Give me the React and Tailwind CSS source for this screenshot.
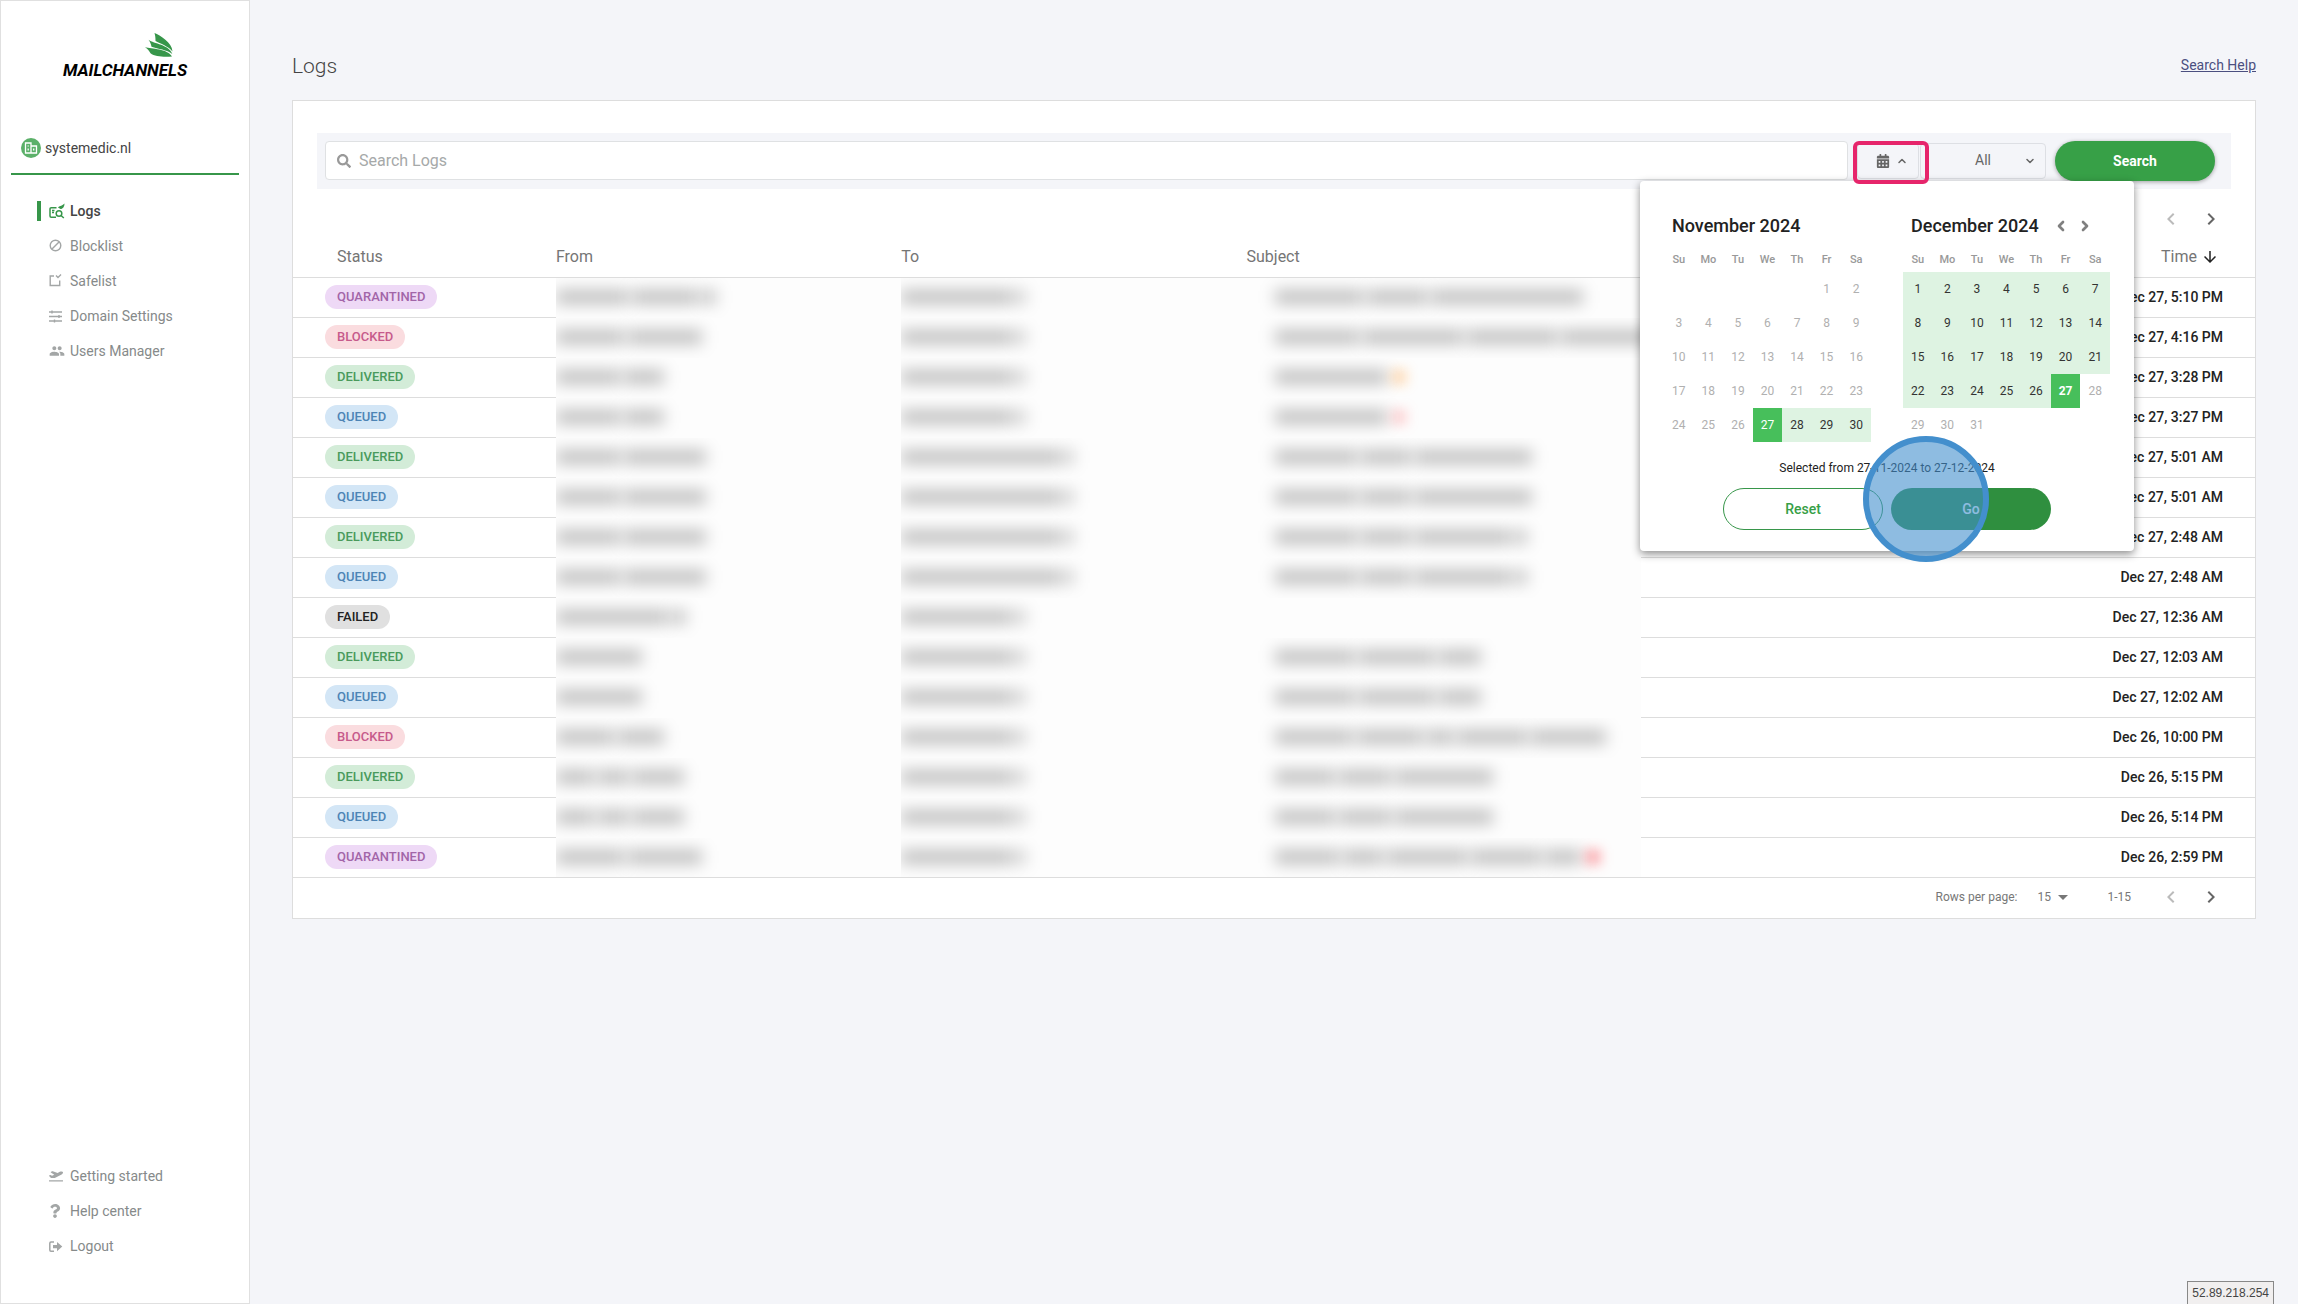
import React from 'react';
import { FaCalendarAlt, FaPlaneDeparture, FaQuestion, FaSearch } from 'react-icons/fa';
import { MdArrowDownward, MdArrowDropDown, MdChevronLeft, MdChevronRight, MdGroup } from 'react-icons/md';
import { ChevronDown, ChevronLeft, ChevronRight, ChevronUp } from 'lucide-react';

const badgeStyles = {
    QUARANTINED: 'bg-[#eed9f6] text-[#a265a8]',
    BLOCKED: 'bg-[#fadcdf] text-[#c65a8b]',
    DELIVERED: 'bg-[#d3ecd8] text-[#4a9a5c]',
    QUEUED: 'bg-[#d3e6f6] text-[#4d84b5]',
    FAILED: 'bg-[#e0e0e0] text-[#222222]'
};

// Anchos de los bloques ocultos de cada columna
const shortTo = [112, 8];
const longTo = [160, 8];

const logs = [
    { status: 'QUARANTINED', time: 'Dec 27, 5:10 PM', from: [72, 66, 14], to: shortTo, subject: [88, 60, 152] },
    { status: 'BLOCKED', time: 'Dec 27, 4:16 PM', from: [68, 74], to: shortTo, subject: [84, 100, 90, 90] },
    { status: 'DELIVERED', time: 'Dec 27, 3:28 PM', from: [64, 40], to: shortTo, subject: [112], mark: 'bg-orange-400/25' },
    { status: 'QUEUED', time: 'Dec 27, 3:27 PM', from: [64, 40], to: shortTo, subject: [112], mark: 'bg-red-400/25' },
    { status: 'DELIVERED', time: 'Dec 27, 5:01 AM', from: [64, 82], to: longTo, subject: [82, 50, 117] },
    { status: 'QUEUED', time: 'Dec 27, 5:01 AM', from: [64, 82], to: longTo, subject: [82, 50, 117] },
    { status: 'DELIVERED', time: 'Dec 27, 2:48 AM', from: [64, 82], to: longTo, subject: [82, 50, 96, 12] },
    { status: 'QUEUED', time: 'Dec 27, 2:48 AM', from: [64, 82], to: longTo, subject: [82, 50, 96, 12] },
    { status: 'FAILED', time: 'Dec 27, 12:36 AM', from: [112, 14], to: shortTo, subject: [] },
    { status: 'DELIVERED', time: 'Dec 27, 12:03 AM', from: [86], to: shortTo, subject: [80, 76, 42] },
    { status: 'QUEUED', time: 'Dec 27, 12:02 AM', from: [86], to: shortTo, subject: [80, 76, 42] },
    { status: 'BLOCKED', time: 'Dec 26, 10:00 PM', from: [58, 46], to: shortTo, subject: [78, 66, 26, 70, 75] },
    { status: 'DELIVERED', time: 'Dec 26, 5:15 PM', from: [38, 30, 52], to: shortTo, subject: [60, 52, 98] },
    { status: 'QUEUED', time: 'Dec 26, 5:14 PM', from: [38, 30, 52], to: shortTo, subject: [60, 52, 98] },
    { status: 'QUARANTINED', time: 'Dec 26, 2:59 PM', from: [68, 74], to: shortTo, subject: [64, 40, 80, 70, 36], mark: 'bg-red-500/35' }
];

const weekDays = ['Su', 'Mo', 'Tu', 'We', 'Th', 'Fr', 'Sa'];

const months = [
    { title: 'November 2024', offset: 5, days: 30, from: 27, to: 30, selected: 27 },
    { title: 'December 2024', offset: 0, days: 31, from: 1, to: 27, selected: 27, nav: true }
];

const Logo = () => (
    <div className="flex flex-col items-center">
        <svg className="ml-[68px] h-6 w-7" viewBox="0 0 28 24" fill="#37964a">
            <path d="M9.500 0C15 2.500 27 9 27.500 18.500C24 13.500 15 10.500 10.500 8C10.500 5 10.300 2.500 9.500 0Z" />
            <path d="M3.500 6.800C9 11 24 11.500 27.300 21C22 16.800 13 16 6.500 13.800C6 11 5 8.800 3.500 6.800Z" />
            <path d="M0 14.200C7 16 22 15.300 27 23.500C20 24 10 24 5.500 20.300C4.500 18 2.500 15.800 0 14.200Z" />
        </svg>
        <span className="mt-[3px] text-[17px] leading-5 font-bold italic text-black">MAILCHANNELS</span>
    </div>
);

const LogsIcon = () => (
    <svg className="h-4 w-4" viewBox="0 0 16 16" fill="none" stroke="currentColor" strokeWidth="1.500">
        <path d="M7 14.200H2.200Q1 14.200 1 13V5.800Q1 4.700 2.200 4.700H7.500M3 7.500H5.500M3 9.500H5" />
        <circle cx="10" cy="10.500" r="2.800" />
        <path d="M12 12.500L14.800 15" />
        <path d="M9 4.500C10 3 12 3.500 15.500 0.500C15.500 3.500 14 6 11.500 6Z" fill="currentColor" stroke="none" />
    </svg>
);

const BlockIcon = () => (
    <svg className="h-3.5 w-3.5" viewBox="0 0 14 14" fill="none" stroke="currentColor" strokeWidth="1.400">
        <circle cx="6.500" cy="6.500" r="5.300" />
        <path d="M3 10L10 3" />
    </svg>
);

const SafeIcon = () => (
    <svg className="h-3.5 w-3.5" viewBox="0 0 14 14" fill="none" stroke="currentColor" strokeWidth="1.400">
        <path d="M5 2H1.200V11.500H10.700V6.500" />
        <path d="M7 1.500L9 3.500L12 0.500" />
    </svg>
);

const SettingsIcon = () => (
    <svg className="h-3.5 w-3.5" viewBox="0 0 14 14" fill="none" stroke="currentColor" strokeWidth="1.400">
        <path d="M0 3H13M0 7.500H13M0 12H13M3 1.500V4.500M10 6V9M5.500 10.500V13.500" />
    </svg>
);

const LogoutIcon = () => (
    <svg className="h-3.5 w-3.5" viewBox="0 0 14 14" fill="currentColor">
        <path d="M5 3H2Q0.800 3 0.800 4.200V11Q0.800 12.200 2 12.200H5" fill="none" stroke="currentColor" strokeWidth="1.500" />
        <path d="M4 6H8V3L13.300 7.600L8 12.200V9.200H4Z" />
    </svg>
);

const mainLinks = [
    { label: 'Logs', icon: <LogsIcon />, active: true },
    { label: 'Blocklist', icon: <BlockIcon /> },
    { label: 'Safelist', icon: <SafeIcon /> },
    { label: 'Domain Settings', icon: <SettingsIcon /> },
    { label: 'Users Manager', icon: <MdGroup className="h-4 w-4" /> }
];

const footerLinks = [
    { label: 'Getting started', icon: <FaPlaneDeparture className="h-3.5 w-3.5" /> },
    { label: 'Help center', icon: <FaQuestion className="h-3.5 w-3" /> },
    { label: 'Logout', icon: <LogoutIcon /> }
];

const NavList = ({ links }) => (
    <ul className="flex flex-col gap-[15px] pl-9">
        {links.map((link) => (
            <li key={link.label}>
                <a
                    href="#"
                    className={`flex h-5 items-center border-l-4 pl-2 text-sm ${link.active
                        ? 'border-[#37964a] font-medium text-[#444444]'
                        : 'border-transparent text-[#868a8a]'}`}
                >
                    <span className={`flex w-[21px] items-center ${link.active ? 'text-[#37964a]' : 'text-[#a3a6a6]'}`}>
                        {link.icon}
                    </span>
                    {link.label}
                </a>
            </li>
        ))}
    </ul>
);

const Sidebar = () => (
    <aside className="flex w-[250px] shrink-0 flex-col border border-[#e0e0e0] bg-white pt-8 pb-[47px]">
        <Logo />

        {/* Dominio activo */}
        <div className="mx-2.5 mt-[51px] flex h-11 items-center gap-1 border-b-2 border-[#37964a] pb-2 pl-2.5">
            <span className="flex h-5 w-5 items-center justify-center rounded-full bg-[#5bb069]">
                <svg className="h-3.5 w-3.5" viewBox="0 0 14 14" fill="none" stroke="white" strokeWidth="1.300">
                    <path d="M1.500 12V2H7V12ZM7 5H12.500V12H1.500M4.200 4.500V5.500M4.200 7.500V9.500M9.700 7.500V9.500" />
                </svg>
            </span>
            <span className="text-sm text-[#444444]">systemedic.nl</span>
        </div>

        <nav className="mt-[26px] flex grow flex-col justify-between">
            <NavList links={mainLinks} />
            <NavList links={footerLinks} />
        </nav>
    </aside>
);

const Month = ({ month }) => {
    const cells = Array.from({ length: 35 }, (_, i) => {
        const day = i - month.offset + 1;
        return day >= 1 && day <= month.days ? day : null;
    });
    const weeks = [0, 1, 2, 3, 4].map((w) => cells.slice(w * 7, w * 7 + 7));

    const dayClass = (day) => {
        if (day === month.selected) {
            return `bg-[#47bf5b] text-white ${month.nav ? 'font-bold' : ''}`;
        }
        if (day >= month.from && day <= month.to) {
            return 'bg-[#def3e2] text-[#333333]';
        }
        return 'text-[#b0b0b0]';
    };

    return (
        <div className="w-[207px]">
            <div className="flex h-8 items-center pl-2">
                <h2 className="text-lg font-medium text-[#222222]">{month.title}</h2>
                {month.nav && (
                    <div className="ml-3.5 flex gap-2 text-[#808080]">
                        <button type="button" aria-label="Previous month"><ChevronLeft className="h-4 w-4" strokeWidth={4} /></button>
                        <button type="button" aria-label="Next month"><ChevronRight className="h-4 w-4" strokeWidth={4} /></button>
                    </div>
                )}
            </div>
            <table className="mt-[7px] w-full table-fixed">
                <thead>
                    <tr>
                        {weekDays.map((name) => (
                            <th key={name} className="h-[23px] p-0 text-[11px] font-medium text-[#999999]">{name}</th>
                        ))}
                    </tr>
                </thead>
                <tbody>
                    {weeks.map((week, w) => (
                        <tr key={w}>
                            {week.map((day, i) => (
                                <td key={i} className="h-[34px] p-0">
                                    {day && (
                                        <button type="button" className={`block h-[34px] w-full text-xs ${dayClass(day)}`}>{day}</button>
                                    )}
                                </td>
                            ))}
                        </tr>
                    ))}
                </tbody>
            </table>
        </div>
    );
};

const DatePicker = () => (
    <div className="absolute top-12 right-[97px] z-10 rounded bg-white px-6 pt-[29px] pb-[21px] shadow-[0_3px_8px_rgba(0,0,0,0.45)]">
        <div className="flex gap-8">
            {months.map((month) => <Month key={month.title} month={month} />)}
        </div>
        <p className="mt-3.5 text-center text-xs leading-6 text-[#222222]">Selected from 27-11-2024 to 27-12-2024</p>
        <div className="mt-2 flex justify-center gap-2">
            <button type="button" className="h-[42px] w-40 rounded-full border border-[#37964a] text-sm font-medium text-[#37a047]">
                Reset
            </button>
            <div className="relative">
                <button type="button" className="h-[42px] w-40 rounded-full bg-[#2f8f3f] text-sm font-medium text-white">
                    Go
                </button>
                {/* Marca del clic */}
                <span className="pointer-events-none absolute -top-[52px] -left-7 h-[126px] w-[126px] rounded-full border-[6px] border-[#438fcd] bg-[#438fcd]/60" />
            </div>
        </div>
    </div>
);

const SearchBar = () => (
    <form className="relative mx-6 flex items-start bg-[#f4f5f9] py-2 pr-4 pl-2" onSubmit={(e) => e.preventDefault()}>
        <div className="flex h-[39px] grow items-center gap-2 rounded border border-[#dfe1e3] bg-white px-[11px]">
            <FaSearch className="h-3.5 w-3.5 text-[#999999]" />
            <input
                type="text"
                aria-label="Search Logs"
                placeholder="Search Logs"
                className="grow text-base text-[#333333] outline-none placeholder:text-[#a6a9a9]"
            />
        </div>
        <div className="relative ml-[9px]">
            <button type="button" aria-label="Date range" className="mt-0.5 flex h-9 w-[62px] items-center justify-center gap-1.5 rounded border border-[#dddfe4] pl-2 text-[#666666]">
                <FaCalendarAlt className="h-3.5 w-3.5" />
                <ChevronUp className="h-3 w-3" strokeWidth={3} />
            </button>
            <span className="pointer-events-none absolute top-0 -left-1 z-20 h-[43px] w-[76px] rounded-md border-4 border-[#e6256b]" />
        </div>
        <div className="relative mt-0.5 ml-px">
            <select aria-label="Status" className="h-9 w-[126px] appearance-none rounded border border-[#dddfe4] pb-0.5 text-center text-sm text-[#666666]">
                <option>All</option>
            </select>
            <ChevronDown className="pointer-events-none absolute top-3 right-2.5 h-3 w-3 text-[#666666]" strokeWidth={3} />
        </div>
        <button type="submit" className="ml-[9px] h-10 w-40 rounded-full bg-[#37a047] text-sm font-bold text-white shadow-[0_1px_4px_rgba(0,0,0,0.35)]">
            Search
        </button>
        <DatePicker />
    </form>
);

const Pager = () => (
    <div className="flex gap-4">
        <button type="button" aria-label="Previous page" className="text-[#bbbbbb]"><MdChevronLeft className="h-6 w-6" /></button>
        <button type="button" aria-label="Next page" className="text-[#666666]"><MdChevronRight className="h-6 w-6" /></button>
    </div>
);

const HiddenText = ({ blocks, mark, indent }) => (
    <div className={`flex h-10 items-center gap-1 overflow-hidden bg-[#fdfdfd] pb-0.5 ${indent ? 'pl-7' : ''}`}>
        {blocks.map((width, i) => (
            <span key={i} className="h-3.5 shrink-0 bg-black/25 blur-[8px]" style={{ width }} />
        ))}
        {mark && <span className={`h-4 w-4 shrink-0 blur-[6px] ${mark}`} />}
    </div>
);

const LogsTable = () => (
    <table className="w-full table-fixed border-separate border-spacing-0">
        <thead>
            <tr className="text-left text-base text-[#757575]">
                <th className="h-[41px] w-[13.4%] border-b border-[#dddddd] p-0 pl-11 font-normal">Status</th>
                <th className="w-[17.6%] border-b border-[#dddddd] p-0 font-normal">From</th>
                <th className="w-[17.6%] border-b border-[#dddddd] p-0 font-normal">To</th>
                <th className="w-[20.1%] border-b border-[#dddddd] p-0 font-normal">Subject</th>
                <th className="border-b border-[#dddddd] p-0 pr-9 font-normal">
                    <span className="flex items-center justify-end gap-1">
                        Time
                        <MdArrowDownward className="h-[18px] w-[18px] text-[#222222]" />
                    </span>
                </th>
            </tr>
        </thead>
        <tbody>
            {logs.map((log, i) => (
                <tr key={i}>
                    <td className="h-10 border-b border-[#dddddd] p-0 pb-0.5 pl-8">
                        <span className={`inline-block h-6 rounded-full px-3 align-middle text-[13px] leading-6 font-medium ${badgeStyles[log.status]}`}>
                            {log.status}
                        </span>
                    </td>
                    <td className="p-0"><HiddenText blocks={log.from} /></td>
                    <td className="p-0"><HiddenText blocks={log.to} /></td>
                    <td className="p-0"><HiddenText blocks={log.subject} mark={log.mark} indent /></td>
                    <td className="border-b border-[#dddddd] p-0 pr-8 pb-0.5 text-right text-sm font-medium text-[#222222]">{log.time}</td>
                </tr>
            ))}
        </tbody>
    </table>
);

const App = () => (
    <div className="flex min-h-screen bg-[#f4f5f9] font-['Roboto',sans-serif]">
        <Sidebar />

        <main className="relative min-w-0 grow px-[42px] pt-[50px]">
            <header className="flex h-[50px] items-start justify-between">
                <h1 className="text-[21px] leading-8 font-light text-[#444444]">Logs</h1>
                <a href="#" className="text-sm leading-[30px] text-[#4b4f80] underline">Search Help</a>
            </header>

            <section className="border border-[#dddddd] bg-white pt-8">
                <SearchBar />
                <div className="flex h-12 justify-end pt-3 pr-8">
                    <Pager />
                </div>
                <LogsTable />
                <div className="relative -mt-px flex h-[41px] items-center justify-end border-t border-[#dddddd] pr-8 pb-0.5 text-xs text-[#777777]">
                    <label htmlFor="rows">Rows per page:</label>
                    <div className="relative ml-5 flex items-center">
                        <select id="rows" className="h-6 w-9 appearance-none">
                            <option>15</option>
                        </select>
                        <MdArrowDropDown className="pointer-events-none absolute -right-0.5 h-6 w-6" />
                    </div>
                    <span className="mr-7 ml-[34px]">1-15</span>
                    <Pager />
                </div>
            </section>

            {/* Dirección del servidor */}
            <div className="absolute right-6 bottom-0 h-[23px] border border-b-0 border-[#888888] bg-[#f1efef] px-1 font-['Liberation_Sans',sans-serif] text-xs leading-[22px] text-[#444444]">
                52.89.218.254
            </div>
        </main>
    </div>
);

export default App;
